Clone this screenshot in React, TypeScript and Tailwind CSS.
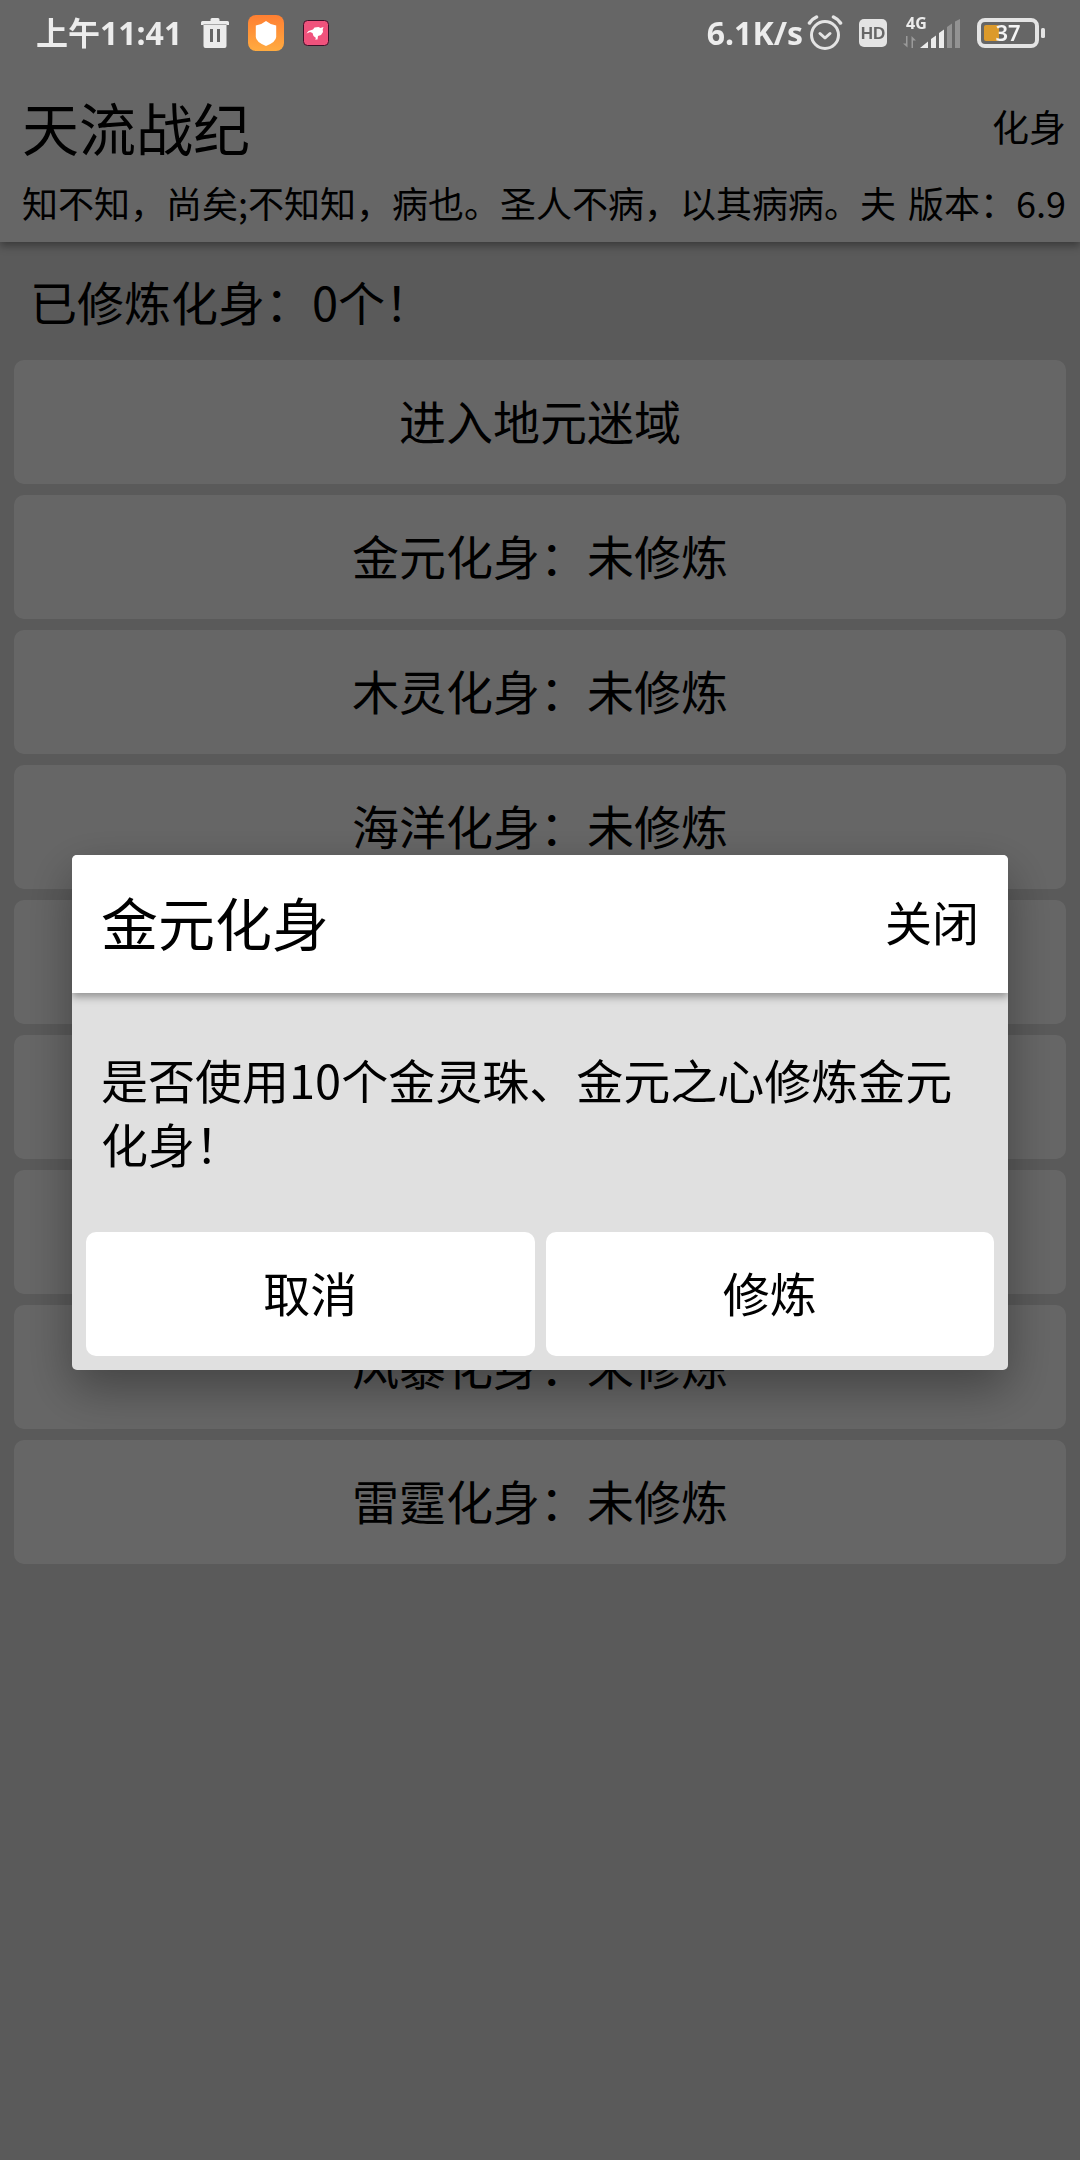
import { useState } from "react";

const avatars = [
  { name: "金元化身", trained: false },
  { name: "木灵化身", trained: false },
  { name: "海洋化身", trained: false },
  { name: "烈焰化身", trained: false },
  { name: "厚土化身", trained: false },
  { name: "寒冰化身", trained: false },
  { name: "风暴化身", trained: false },
  { name: "雷霆化身", trained: false },
];

function TrashIcon() {
  return (
    <svg width="28" height="30" viewBox="0 0 28 30" fill="#ececec">
      <path
        fillRule="evenodd"
        d="M9.500 1.500Q9.500 0 11 0h6Q18.500 0 18.500 1.500V3h8Q28 3 28 4.500V7H0V4.500Q0 3 1.500 3h8zM2.500 6.500h23V28q0 2-2 2h-19q-2 0-2-2zM9 11V24h3V11zM16 11V24h3V11z"
      />
    </svg>
  );
}

function ShieldIcon() {
  return (
    <svg width="36" height="36" viewBox="0 0 36 36">
      <defs>
        <linearGradient id="shield" x1="0" y1="0" x2="0" y2="1">
          <stop offset="0" stopColor="#ff7f32" />
          <stop offset="1" stopColor="#ffab40" />
        </linearGradient>
      </defs>
      <rect width="36" height="36" rx="8" fill="url(#shield)" />
      <path
        d="M18 6 Q22 9.500 28.200 10.500 V22 Q28 27 18 31 Q8 27 7.800 22 V10.500 Q14 9.500 18 6z"
        fill="#fff"
      />
    </svg>
  );
}

function BirdIcon() {
  return (
    <svg width="26" height="26" viewBox="0 0 26 26">
      <rect x="0.500" y="0.500" width="25" height="25" rx="4" fill="#f0527c" stroke="#3d1028" />
      <path
        d="M3.500 13.500 5.500 11 10 9.500l1.500-2 4-.5 2 1 3-1-.8 2.500.3 2.500-2 3-3 1-.5 3.500h-2.500l1-1.500-2.500-2-1-3-2.500-1z"
        fill="#fff"
      />
    </svg>
  );
}

function AlarmIcon() {
  return (
    <svg
      width="36"
      height="36"
      viewBox="0 0 36 36"
      fill="none"
      stroke="#e4e4e4"
      strokeWidth="3"
      strokeLinecap="round"
    >
      <circle cx="18" cy="20" r="13.500" />
      <path d="M13 18.500l5 4.500 5-4.500" strokeLinejoin="round" />
      <path d="M2.500 8q2.500-4 7-6M33.500 8q-2.500-4-7-6" strokeWidth="3.500" />
    </svg>
  );
}

function HdIcon() {
  return (
    <svg width="28" height="28" viewBox="0 0 28 28">
      <rect width="28" height="28" rx="5" fill="#e4e4e4" />
      <text
        x="14"
        y="20"
        textAnchor="middle"
        fontSize="17"
        fontWeight="700"
        fill="#666"
        className="font-['Liberation_Sans',sans-serif]"
      >
        HD
      </text>
    </svg>
  );
}

function SignalIcon() {
  return (
    <svg width="58" height="40" viewBox="0 -4 58 40">
      <text
        x="3"
        y="12"
        fontSize="16"
        fontWeight="700"
        fill="#ececec"
        className="font-['Noto_Sans',sans-serif]"
      >
        4G
      </text>
      <path
        d="M4.500 19v11.500L0 26.500h3V19zM8.500 31V19l4.500 4.500h-3V31z"
        fill="#9a9a9a"
      />
      <path d="M17 31l8-6.500V31zM28 22l5-3.500V31h-5zM36 16l5-3.500V31h-5z" fill="#ececec" />
      <path d="M44 10l5-3.500V31h-5zM52 4.500L57 2v29h-5z" fill="#929292" />
    </svg>
  );
}

function BatteryIcon() {
  return (
    <svg width="68" height="30" viewBox="0 0 68 30">
      <rect x="2" y="2" width="58" height="26" rx="6" fill="none" stroke="#e4e4e4" strokeWidth="4" />
      <rect x="64" y="10" width="4" height="10" rx="1.500" fill="#e4e4e4" />
      <rect x="7" y="7" width="15" height="16" rx="2" fill="#dc9a2b" />
      <text
        x="31"
        y="23"
        textAnchor="middle"
        fontSize="22"
        fontWeight="600"
        fill="#f4f4f4"
        className="font-['Noto_Sans',sans-serif]"
      >
        37
      </text>
    </svg>
  );
}

function StatusBar() {
  return (
    <div className="fixed inset-x-0 top-0 z-20 flex h-[66px] items-center justify-between pl-9 pr-[35px] text-[32px] font-bold text-[#ececec] font-['Noto_Sans','Noto_Sans_CJK_SC',sans-serif]">
      <div className="flex items-center gap-[19px]">
        <span>上午11:41</span>
        <TrashIcon />
        <ShieldIcon />
        <BirdIcon />
      </div>
      <div className="flex items-center gap-4">
        <div className="flex items-center gap-1">
          <span>6.1K/s</span>
          <AlarmIcon />
        </div>
        <HdIcon />
        <SignalIcon />
        <BatteryIcon />
      </div>
    </div>
  );
}

function ListButton({ label, onClick }: { label: string; onClick?: () => void }) {
  return (
    <button
      type="button"
      onClick={onClick}
      className="w-full rounded-[10px] bg-white pt-7 pb-8 text-[47px] leading-[64px]"
    >
      {label}
    </button>
  );
}

export default function App() {
  const [selected, setSelected] = useState<string | null>("金元化身");
  const close = () => setSelected(null);

  return (
    <div className="min-h-screen bg-[#e0e0e0] text-black font-['Noto_Sans_CJK_SC',sans-serif]">
      <StatusBar />

      <header className="relative bg-white pl-[22px] pr-[14px] pt-[88px] pb-4 shadow-[0_4px_8px_rgba(0,0,0,0.35)]">
        <div className="flex items-center justify-between leading-[76px]">
          <h1 className="text-[57px]">天流战纪</h1>
          <span className="text-[37px]">化身</span>
        </div>
        <div className="mt-[14px] flex gap-3 text-[36px] leading-[48px]">
          <p className="min-w-0 flex-1 overflow-hidden whitespace-nowrap">
            知不知，尚矣;不知知，病也。圣人不病，以其病病。夫
          </p>
          <span className="shrink-0">版本：6.9</span>
        </div>
      </header>

      <main className="px-[14px] pt-[27px]">
        <p className="px-4 text-[47px] leading-[64px]">已修炼化身：0个！</p>
        <div className="mt-[27px] flex flex-col gap-[11px]">
          <ListButton label="进入地元迷域" />
          {avatars.map((item) => (
            <ListButton
              key={item.name}
              label={`${item.name}：${item.trained ? "已修炼" : "未修炼"}`}
              onClick={() => setSelected(item.name)}
            />
          ))}
        </div>
      </main>

      {selected && (
        <div className="fixed inset-0 z-10 flex items-center bg-black/60 px-[72px] pt-16">
          <div
            role="dialog"
            aria-labelledby="dialog-title"
            className="w-full overflow-hidden rounded-[5px] bg-[#e0e0e0] shadow-[0_18px_48px_rgba(0,0,0,0.35)]"
          >
            <div className="relative flex items-center justify-between bg-white px-[29px] pt-7 pb-[34px] leading-[76px] shadow-[0_4px_8px_rgba(0,0,0,0.35)]">
              <h2 id="dialog-title" className="text-[57px]">
                {selected}
              </h2>
              <button type="button" onClick={close} className="text-[47px]">
                关闭
              </button>
            </div>
            <p className="px-[29px] pt-[54px] pb-[57px] text-[47px] leading-[64px]">
              是否使用10个金灵珠、金元之心修炼金元化身！
            </p>
            <div className="flex gap-[11px] px-[14px] pb-[14px]">
              <ListButton label="取消" onClick={close} />
              <ListButton label="修炼" onClick={close} />
            </div>
          </div>
        </div>
      )}
    </div>
  );
}
